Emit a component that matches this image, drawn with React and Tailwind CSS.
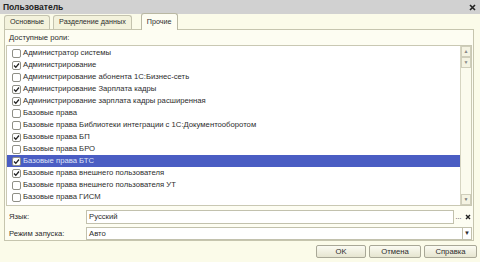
import React from 'react';

const roles = [
  { name: 'Администратор системы', on: false },
  { name: 'Администрирование', on: true },
  { name: 'Администрирование абонента 1С:Бизнес-сеть', on: false },
  { name: 'Администрирование Зарплата кадры', on: true },
  { name: 'Администрирование зарплата кадры расширенная', on: true },
  { name: 'Базовые права', on: false },
  { name: 'Базовые права Библиотеки интеграции с 1С:Документооборотом', on: false },
  { name: 'Базовые права БП', on: true },
  { name: 'Базовые права БРО', on: false },
  { name: 'Базовые права БТС', on: true, selected: true },
  { name: 'Базовые права внешнего пользователя', on: true },
  { name: 'Базовые права внешнего пользователя УТ', on: false },
  { name: 'Базовые права ГИСМ', on: false },
];

const Check = ({ on }) => (
  <span className="w-[9px] h-[9px] border border-[#8f8f86] bg-white rounded-[2px] flex items-center justify-center shrink-0">
    {on && (
      <svg width="7" height="7" viewBox="0 0 7 7">
        <path d="M1 3.5 L2.8 5.3 L6 1.5" stroke="#222" strokeWidth="1.3" fill="none" />
      </svg>
    )}
  </span>
);

const Tab = ({ label, active }) => (
  <div
    className={
      active
        ? 'h-[17px] px-[5px] flex items-center text-[7.2px] border border-b-0 border-[#b9b8a3] rounded-t-[3px] bg-[#fdfdf2] -mb-px z-10'
        : 'h-[14px] px-[5px] flex items-center text-[7.2px] border border-b-0 border-[#c4c3ae] rounded-t-[3px] bg-[#f3f2dc]'
    }
  >
    {label}
  </div>
);

const Button = ({ label }) => (
  <div className="h-[13px] flex-1 flex items-center justify-center border border-[#a9a897] rounded-[2px] bg-gradient-to-b from-[#fbfbf2] to-[#e6e5d0]">
    {label}
  </div>
);

export default function App() {
  return (
    <div
      className="w-[480px] h-[262px] bg-[#fbfbe9] flex flex-col text-[7.7px] text-[#2d2d2d] overflow-hidden"
      style={{ fontFamily: '"Liberation Sans", Arial, sans-serif' }}
    >
      <div className="h-[14px] bg-[#d1d1d1] flex items-center justify-between pl-[3px] pr-[4px] shrink-0">
        <span className="font-bold text-[8.5px] text-[#222]">Пользователь</span>
        <svg width="7" height="7" viewBox="0 0 7 7">
          <path d="M1 1 L6 6 M6 1 L1 6" stroke="#222" strokeWidth="1.6" />
        </svg>
      </div>

      <div className="h-[15px] flex items-end gap-[3px] pl-[4px] shrink-0">
        <Tab label="Основные" />
        <Tab label="Разделение данных" />
        <div className="w-[3px]" />
        <Tab label="Прочие" active />
      </div>

      <div className="mx-[4px] mr-[6px] h-[212px] border border-[#c6c5ae] bg-[#fdfdf2] flex flex-col px-[1px] shrink-0">
        <div className="h-[15px] pl-[3px] flex items-center">Доступные роли:</div>
        <div className="h-[161px] border border-[#c9c8b3] bg-white flex">
          <div className="flex-1 flex flex-col pt-px">
            {roles.map((r) => (
              <div
                key={r.name}
                className={
                  'h-[12px] flex items-center gap-[2px] pl-[5px] whitespace-nowrap ' +
                  (r.selected ? 'bg-[#4a5dc3] text-[#dfe3f7]' : '')
                }
              >
                <Check on={r.on} />
                <span>{r.name}</span>
              </div>
            ))}
          </div>
          <div className="w-[11px] border-l border-[#d6d5c2] bg-[#fbfbee] flex flex-col">
            <div className="h-[11px] border border-[#cfcebb] bg-[#f4f3e2] flex items-center justify-center text-[5px] text-[#888]">▲</div>
            <div className="h-[11px] border border-[#cfcebb] bg-[#f4f3e2] flex items-center justify-center text-[5px] text-[#888]">▼</div>
            <div className="flex-1" />
            <div className="h-[11px] border border-[#cfcebb] bg-[#f4f3e2] flex items-center justify-center text-[5px] text-[#777]">▼</div>
          </div>
        </div>

        <div className="mt-[4px] h-[14px] flex items-center">
          <span className="w-[80px] pl-[3px]">Язык:</span>
          <div className="flex-1 h-[14px] border border-[#c2c1ad] bg-white flex items-center pl-[2px]">Русский</div>
          <div className="w-[9px] h-[14px] flex items-end justify-center pb-[2px] text-[7px]">...</div>
          <div className="w-[9px] h-[14px] flex items-center justify-center">
            <svg width="6" height="6" viewBox="0 0 6 6">
              <path d="M1 1 L5 5 M5 1 L1 5" stroke="#222" strokeWidth="1.4" />
            </svg>
          </div>
        </div>
        <div className="mt-[3px] h-[13px] flex items-center">
          <span className="w-[80px] pl-[3px]">Режим запуска:</span>
          <div className="flex-1 h-[13px] border border-[#c2c1ad] bg-white flex items-center pl-[2px]">Авто</div>
          <div className="w-[9px] h-[13px] border border-l-0 border-[#c2c1ad] bg-white flex items-center justify-center text-[6px]">▼</div>
        </div>
      </div>

      <div className="flex justify-end pr-[3px] pt-[4px] gap-[3px]">
        <div className="w-[50px] flex"><Button label="OK" /></div>
        <div className="w-[52px] flex"><Button label="Отмена" /></div>
        <div className="w-[53px] flex"><Button label="Справка" /></div>
      </div>
    </div>
  );
}
